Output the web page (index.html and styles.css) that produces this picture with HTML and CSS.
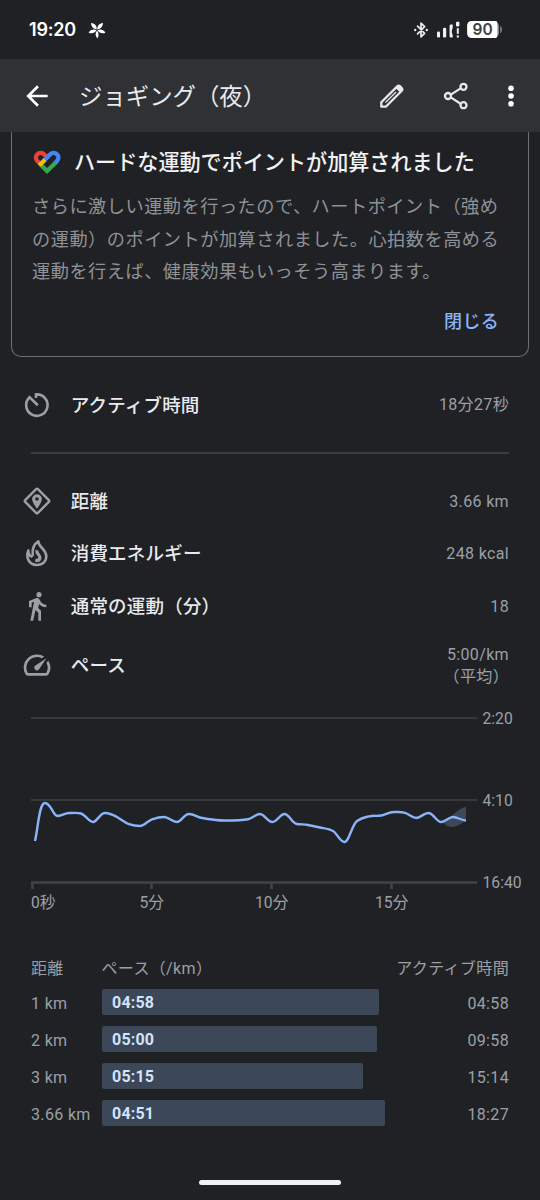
FILE: index.html
```html
<!DOCTYPE html>
<html lang="ja">
<head>
<meta charset="utf-8">
<title>ジョギング（夜）</title>
<link rel="stylesheet" href="styles.css">
</head>
<body>
<div class="screen">
  <header class="status">
    <span class="clock">19:20</span>
    <svg class="pinwheel" width="18" height="18" viewBox="-9 -9 18 18" fill="#fff">
      <path d="M0 .6C2 3 2.100 6 .4 8.400C-1.900 6.400-2 3 0 .6Z"/>
      <path transform="rotate(72)" d="M0 .6C2.200 3 2.200 6 0 8.800C-2.200 6.400-2.200 3 0 .6Z"/>
      <path transform="rotate(144)" d="M0 .6C2.400 3 2.800 6 .8 9.200C-2.400 6.400-2.200 3 0 .6Z"/>
      <path transform="rotate(216)" d="M0 .6C2.200 3 2.400 6.400-.8 9.200C-2.800 6-2.400 3 0 .6Z"/>
      <path transform="rotate(288)" d="M0 .6C2.200 3 2.200 6.400 0 8.800C-2.200 6-2.200 3 0 .6Z"/>
    </svg>
    <span class="spacer"></span>
    <svg width="90" height="20" viewBox="0 0 90 20">
      <g fill="none" stroke="#e8e8ea" stroke-width="1.8" stroke-linejoin="round" stroke-linecap="round">
        <path d="M3.6 6.2L10.6 13.4L7 16.8V3.2L10.6 6.6L3.6 13.8"/>
      </g>
      <circle cx="1.2" cy="10" r="1.2" fill="#e8e8ea"/><circle cx="12.8" cy="10" r="1.2" fill="#e8e8ea"/>
      <g fill="#f1f1f3">
        <rect x="23" y="11.5" width="3" height="6" rx="1.2"/>
        <rect x="29" y="7.8" width="3.2" height="9.7" rx="1.2"/>
        <path d="M38.7 4.6V8.2C37.6 9 37.6 14 38.7 14.8V17.5H36.8Q35.6 17.5 35.6 16.3V6Q35.6 4.6 37 4.6Z"/>
        <rect x="42" y="1.8" width="3.4" height="4.6" rx=".8"/>
        <rect x="42.8" y="8.2" width="2" height="5.6"/>
        <rect x="42.8" y="15.4" width="2" height="2.2"/>
      </g>
      <rect x="53.2" y="1" width="31.6" height="17" rx="5" fill="#a4a5a8"/>
      <path d="M58.2 1H81.8Q83.2 1 83.2 3V16Q83.2 18 81.8 18H58.2Q53.2 18 53.2 13V6Q53.2 1 58.2 1Z" fill="#fff"/>
      <path d="M86 6Q88 6.4 88 8V11Q88 12.6 86 13Z" fill="#707174"/>
      <text class="battery" x="68.6" y="15" text-anchor="middle">90</text>
    </svg>
  </header>

  <nav class="appbar">
    <svg width="32" height="32" viewBox="0 0 24 24" fill="#fff"><path d="M20 11H7.83l5.59-5.59L12 4l-8 8 8 8 1.41-1.41L7.83 13H20z"/></svg>
    <h1>ジョギング（夜）</h1>
    <svg class="edit" width="28" height="28" viewBox="0 0 28 28">
      <path d="M3.3 20.3L19 4.6Q20.7 3 22.4 4.6L23.5 5.7Q25.1 7.4 23.5 9L7.8 24.7H3.3Z" fill="none" stroke="#e8e8ea" stroke-width="2.3" stroke-linejoin="round"/>
      <path d="M17.5 6L20 3.6Q21 3 22.6 4.2L24 6Q25 7.5 23.5 9L22 10.5Z" fill="#e8e8ea"/>
      <path d="M7.5 20.5L18 10" stroke="#e8e8ea" stroke-width="1.2"/>
    </svg>
    <svg class="share" width="28" height="28" viewBox="0 0 28 28" fill="none" stroke="#e8e8ea" stroke-width="2.3">
      <path d="M8.8 12.6L18.6 6.4M8.8 15.4L18.6 21.8"/>
      <circle cx="6" cy="14" r="3"/><circle cx="21.5" cy="4.8" r="3"/><circle cx="21.5" cy="23.2" r="3"/>
    </svg>
    <svg class="more" width="8" height="28" viewBox="0 0 8 28" fill="#fff"><circle cx="4" cy="6.2" r="2.8"/><circle cx="4" cy="14" r="2.8"/><circle cx="4" cy="21.8" r="2.8"/></svg>
  </nav>

  <section class="card">
    <div class="card-head">
      <svg width="28" height="24" viewBox="0 0 84 72" fill="none" stroke-width="13">
        <path d="M19 39L13 33A14 14 0 0 1 33 13L43 23" stroke="#ea4335"/>
        <path d="M65 41L72 33A14 14 0 0 0 52 13L33 32" stroke="#4285f4"/>
        <path d="M67 39L42 63L19 40" stroke="#34a853" stroke-linejoin="miter"/>
        <path d="M19 46L36 29" stroke="#fbbc04"/>
      </svg>
      <h2>ハードな運動でポイントが加算されました</h2>
    </div>
    <p>さらに激しい運動を行ったので、ハートポイント（強め<br>の運動）のポイントが加算されました。心拍数を高める<br>運動を行えば、健康効果もいっそう高まります。</p>
    <a class="close">閉じる</a>
  </section>

  <section class="row row-active">
    <svg width="32" height="32" viewBox="0 0 32 32" fill="none" stroke="#9aa0a6" stroke-width="2.6">
      <path d="M15 9V5.4A10.7 10.7 0 1 1 8.6 8.2L16.8 16.2"/>
    </svg>
    <span class="label">アクティブ時間</span><span class="value">18分27秒</span>
  </section>
  <hr>
  <section class="metrics">
    <div class="row">
      <svg width="32" height="32" viewBox="0 0 32 32"><rect x="7" y="7" width="18" height="18" rx="1.3" transform="rotate(45 16 16)" fill="none" stroke="#9aa0a6" stroke-width="2.4"/><path fill="#9aa0a6" fill-rule="evenodd" d="M16 9.2A4.9 4.9 0 0 1 20.9 14.1C20.9 17.3 16 24 16 24S11.1 17.3 11.1 14.1A4.9 4.9 0 0 1 16 9.2ZM16 12.2A1.8 1.8 0 1 0 16 15.8A1.8 1.8 0 1 0 16 12.2Z"/></svg>
      <span class="label">距離</span><span class="value">3.66 km</span>
    </div>
    <div class="row">
      <svg width="32" height="32" viewBox="0 0 32 32" fill="none" stroke="#9aa0a6" stroke-width="2.6" stroke-linejoin="round">
        <path d="M7.300 13.500C6 17 6 20 7.200 22.600C10.500 29.700 21.500 29.700 24.700 22.800C26.600 17.600 24 14 21 11C18.700 8.800 17.400 7.200 17.300 4.300C13.200 7 10.900 11.500 11.800 17.500C12 19.500 9.800 20 8.700 18.300C7.700 16.800 7.400 15 7.300 13.500Z"/>
        <path d="M15.800 13.200C15.200 17.500 19.800 18 18.900 21.200C18.400 23.100 16.400 23.700 14.300 23.300" stroke-width="3.2"/>
      </svg>
      <span class="label">消費エネルギー</span><span class="value">248 kcal</span>
    </div>
    <div class="row">
      <svg width="32" height="32" viewBox="0 0 24 24" fill="#9aa0a6"><path d="M13.5 5.5c1.1 0 2-.9 2-2s-.9-2-2-2-2 .9-2 2 .9 2 2 2zM9.8 8.9L7 23h2.1l1.8-8 2.1 2v6h2v-7.5l-2.1-2 .6-3C14.8 12 16.8 13 19 13v-2c-1.9 0-3.5-1-4.3-2.4l-1-1.6c-.4-.6-1-1-1.7-1-.3 0-.5.1-.8.1L6 8.3V13h2V9.6l1.8-.7"/></svg>
      <span class="label">通常の運動（分）</span><span class="value">18</span>
    </div>
    <div class="row row-pace">
      <svg width="32" height="32" viewBox="0 0 24 24" fill="#9aa0a6"><path d="M20.38 8.57l-1.23 1.85a8 8 0 0 1-.22 7.58H5.07A8 8 0 0 1 15.58 6.85l1.85-1.23A10 10 0 0 0 3.35 19a2 2 0 0 0 1.72 1h13.85a2 2 0 0 0 1.74-1 10 10 0 0 0-.27-10.44z"/><path d="M10.59 15.41a2 2 0 0 0 2.83 0l5.66-8.49-8.49 5.66a2 2 0 0 0 0 2.83z"/></svg>
      <span class="label">ペース</span><span class="value">5:00/km<br>（平均）</span>
    </div>
  </section>

  <svg class="chart" width="540" height="230" viewBox="0 698 540 230">
    <path d="M31 717.9H477M31 799.9H477" stroke="#37383c" stroke-width="2"/>
    <path d="M31 882.5H477" stroke="#424347" stroke-width="2.6"/>
    <path d="M32.5 882V889M151.5 882V889M271.5 882V889M391.5 882V889" stroke="#424347" stroke-width="2.6"/>
    <path d="M441 822C450 820 457 808 466 806.7V821.5C461 822.5 458 827 452 827C446 827 444 822 441 822Z" fill="#3c4758"/>
    <path d="M35 841C38 829 39 803 45 803S53 816 57.500 816S65 813 69 813S77 812.500 81 813.500S89 822 93 822S100 813 105 813S113 814.800 117 817S125 822.800 129 824.200S136 826 140 826S148 820.600 152 819.300S160 817 164 817S173 822 177 822S184 814 189 814S197 816.900 201 817.700S217 820.500 225 820.500S244 820 248 819.200S256 814 260 814S268 822 272.500 822S280 814 284.500 814S292 822.900 296 823.700S304 824.300 308 825S316 826.600 320 827.500S329 828.700 333 831S340 842 344.500 842S352 824.500 357 821S365 817.300 369 816.300S377 816.300 381 815.500S389 812 394 812S401 811.600 405 812.800S412 818 416 818S424 813 428.500 813S437 822 441 822S449 817 453 817S462 820.500 466 820.500" fill="none" stroke="#8ab4f8" stroke-width="2.4"/>
    <g class="axis">
      <text x="482.500" y="723.600">2:20</text><text x="482.500" y="805.600">4:10</text><text x="482.500" y="887.600">16:40</text>
      <text x="31" y="908">0秒</text><text x="151.700" y="908" text-anchor="middle">5分</text><text x="271.700" y="908" text-anchor="middle">10分</text><text x="391.700" y="908" text-anchor="middle">15分</text>
    </g>
  </svg>

  <section class="splits">
    <div class="split head"><span>距離</span><span>ペース（/km）</span><span class="time">アクティブ時間</span></div>
    <div class="split"><span>1 km</span><span class="bar" style="width:277px">04:58</span><span class="time">04:58</span></div>
    <div class="split"><span>2 km</span><span class="bar" style="width:275.500px">05:00</span><span class="time">09:58</span></div>
    <div class="split"><span>3 km</span><span class="bar" style="width:261.500px">05:15</span><span class="time">15:14</span></div>
    <div class="split"><span>3.66 km</span><span class="bar" style="width:283.500px">04:51</span><span class="time">18:27</span></div>
  </section>
  <div class="home"></div>
</div>
</body>
</html>
```
FILE: styles.css
```css
* { box-sizing: border-box; margin: 0; padding: 0; }
body { background: #202125; font-family: Roboto, "Noto Sans CJK JP", sans-serif; color: #9aa0a6; }
svg { display: block; flex: none; }
.screen { width: 540px; height: 1200px; overflow: hidden; display: flex; flex-direction: column; }
.screen > * { flex: none; }

.status { height: 59px; padding: 0 36px 0 29px; display: flex; align-items: center; }
.clock { font: 600 18px Inter, sans-serif; letter-spacing: -0.2px; color: #fff; width: 59px; }
.spacer { flex: 1; }
.battery { font: 600 15.500px Inter, sans-serif; fill: #404144; }

.appbar { height: 73px; background: #303134; padding: 0 25px 0 21px; display: flex; align-items: center; }
.appbar h1 { font-size: 23.400px; font-weight: 400; color: #e8eaed; padding: 0 0 2px 26px; flex: 1; white-space: nowrap; }
.share { margin-left: 36px; }
.more { margin-left: 37px; }

.card { height: 225px; margin: 0 11px; border: 1px solid #6e6f74; border-top: 0; border-radius: 0 0 10px 10px; padding: 15px 29px 0 20px; display: flex; flex-direction: column; }
.card-head { display: flex; align-items: center; gap: 13px; height: 31px; padding-left: 1px; }
.card-head svg { margin-top: -2px; }
.card h2 { font-size: 21.100px; font-weight: 500; color: #f1f3f4; white-space: nowrap; line-height: 31px; }
.card p { font-size: 18.200px; letter-spacing: .5px; line-height: 32.500px; color: #8e9297; white-space: nowrap; padding-top: 13px; }
.close { align-self: flex-end; font-size: 18px; letter-spacing: .3px; font-weight: 500; color: #8ab4f8; line-height: 28px; margin-top: 19px; }

.row { height: 52.500px; padding: 0 31px 0 20.700px; display: flex; align-items: center; }
.row-active { height: 95px; }
.label { padding: 0 0 2px 18px; font-size: 18.500px; letter-spacing: .2px; font-weight: 500; color: #e8eaed; flex: 1; white-space: nowrap; }
.value { font-size: 16px; letter-spacing: .35px; line-height: 22.500px; text-align: right; padding-top: 2px; }
hr { border: 0; height: 2px; background: #3c3d41; margin: 0 31px; }
.metrics { padding-top: 20.500px; }
.row-pace { height: 66px; }

.chart { margin-top: -0.500px; }
.axis { font-size: 15.700px; fill: #9aa0a6; }

.splits { padding: 24px 31px 0; font-size: 16px; display: flex; flex-direction: column; gap: 10.500px; }
.split { height: 26.500px; display: grid; grid-template-columns: 70.500px 1fr auto; align-items: center; letter-spacing: .35px; white-space: nowrap; }
.split > span:not(.bar) { padding-top: 3px; }
.bar { height: 26.500px; border-radius: 2px; background: #3c4758; color: #d2e3fc; font-weight: 700; line-height: 28px; padding-left: 10.500px; letter-spacing: .2px; }
.home { width: 142px; height: 5px; border-radius: 3px; background: #f1f1f1; margin: 54px auto 0; }
```
